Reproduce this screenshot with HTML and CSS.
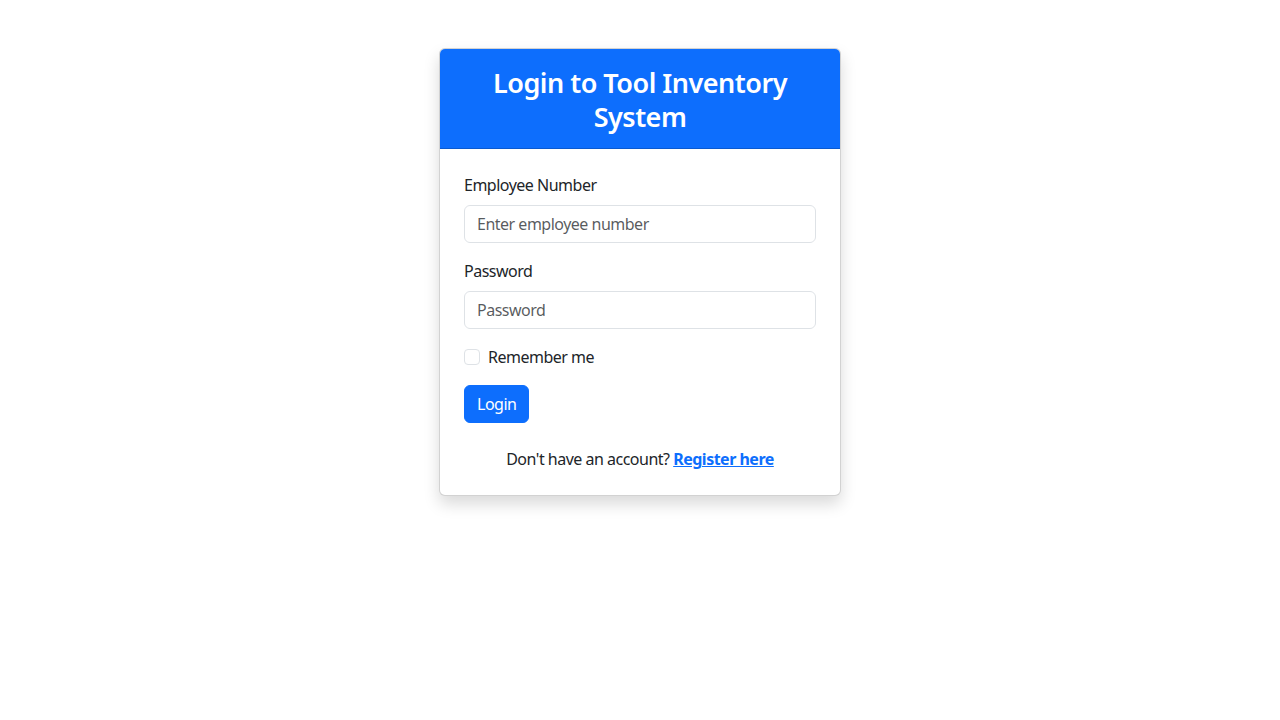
FILE: index.html
```html
<!DOCTYPE html>
<html lang="en">
<head>
<meta charset="utf-8">
<title>Login - Tool Inventory System</title>
<link rel="stylesheet" href="styles.css">
</head>
<body>
<main class="page">
  <section class="card">
    <header class="card-header">
      <h3 class="card-title">Login to Tool Inventory System</h3>
    </header>
    <div class="card-body">
      <form class="form">
        <div class="field">
          <label class="label" for="emp">Employee Number</label>
          <input class="input" id="emp" type="text" placeholder="Enter employee number">
        </div>
        <div class="field">
          <label class="label" for="pw">Password</label>
          <input class="input" id="pw" type="password" placeholder="Password">
        </div>
        <div class="check">
          <input class="check-box" type="checkbox" id="rem">
          <label class="check-label" for="rem">Remember me</label>
        </div>
        <button class="btn" type="button">Login</button>
      </form>
      <p class="footer-text">Don't have an account? <a class="link" href="#">Register here</a></p>
    </div>
  </section>
</main>
</body>
</html>
```
FILE: styles.css
```css
* { box-sizing: border-box; }
html, body { margin: 0; padding: 0; background: #fff; }
body {
  font-family: "Segoe UI", "Noto Sans", "Open Sans", sans-serif;
  font-size: 16px;
  line-height: 1.5;
  letter-spacing: -0.5px;
  color: #212529;
  min-height: 720px;
}
.page {
  display: flex;
  justify-content: center;
  padding: 48px 0 60px;
}
.card {
  width: 402px;
  border: 1px solid rgba(0,0,0,0.175);
  border-radius: 6px;
  box-shadow: 0 8px 16px rgba(0,0,0,0.15);
  overflow: hidden;
  background: #fff;
}
.card-header {
  background: #0d6efd;
  color: #fff;
  padding: 17px 16px 15px;
  text-align: center;
  border-bottom: 1px solid rgba(0,0,0,0.175);
}
.card-title {
  margin: 0;
  font-size: 27px;
  font-weight: 600;
  line-height: 1.245;
  letter-spacing: -0.5px;
}
.card-body { padding: 24px; }
.form { display: flex; flex-direction: column; align-items: flex-start; }
.field { width: 100%; margin-bottom: 16px; }
.label { display: block; margin-bottom: 8px; }
.input {
  display: block;
  width: 100%;
  height: 38px;
  padding: 6px 12px;
  font: inherit;
  letter-spacing: -0.5px;
  color: #212529;
  border: 1px solid #dee2e6;
  border-radius: 6px;
  background: #fff;
}
.input::placeholder { color: rgba(33,37,41,0.75); }
.check {
  display: flex;
  align-items: center;
  gap: 8px;
  margin-bottom: 16px;
  height: 24px;
}
.check-box {
  appearance: none;
  margin: 0;
  width: 16px;
  height: 16px;
  border: 1px solid #dee2e6;
  border-radius: 4px;
  background: #fff;
}
.btn {
  font: inherit;
  letter-spacing: -0.5px;
  color: #fff;
  background: #0d6efd;
  border: 1px solid #0d6efd;
  border-radius: 6px;
  padding: 6px 12px;
  line-height: 1.5;
}
.footer-text {
  margin: 24px 0 0;
  text-align: center;
}
.link {
  color: #0d6efd;
  font-weight: 700;
  text-decoration: underline;
}
```
